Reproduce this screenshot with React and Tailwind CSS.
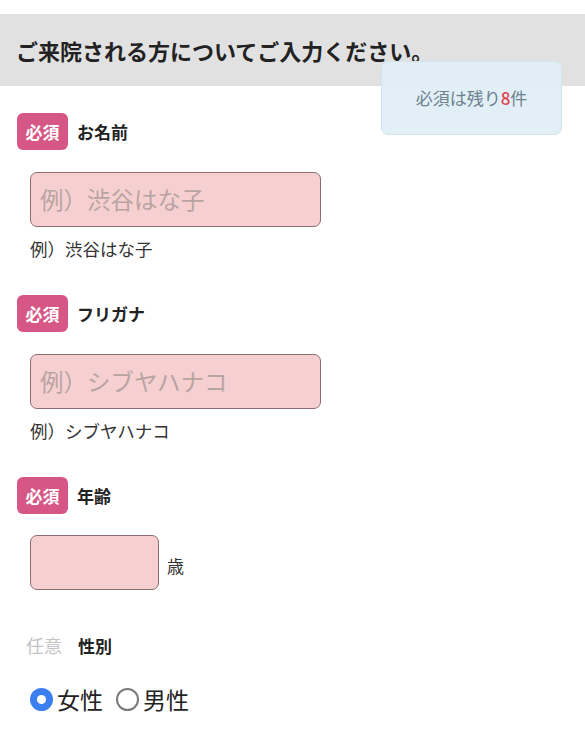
import React from "react";

const FONT = { fontFamily: '"Noto Sans CJK JP", "Noto Sans", sans-serif' };

function Required() {
  return (
    <span className="inline-flex items-center justify-center w-[51px] h-[37px] rounded-[6px] bg-[#d65686] text-white text-[17px] font-bold">
      必須
    </span>
  );
}

function Field({ label, placeholder, hint }) {
  return (
    <div className="flex flex-col">
      <div className="flex items-center gap-[9px] pl-[17px]">
        <Required />
        <span className="text-[17px] font-bold text-[#222]">{label}</span>
      </div>
      <div className="pl-[30px] mt-[22px]">
        <div className="w-[291px] h-[55px] rounded-[7px] border-[1.5px] border-[#8c6d70] bg-[#f6d0d0] flex items-center pl-[9px] text-[23.5px] text-[#b9a4a4]">
          {placeholder}
        </div>
        <div className="mt-[9px] text-[17.5px] leading-[26px] text-[#333]">{hint}</div>
      </div>
    </div>
  );
}

export default function App() {
  return (
    <div className="relative w-[585px] h-[734px] bg-white overflow-hidden" style={FONT}>
      <div className="pt-[14px]">
        <div className="h-[72px] bg-[#e1e1e1] flex items-center pl-[16px]">
          <h1 className="text-[22px] font-bold text-[#222]">ご来院される方についてご入力ください。</h1>
        </div>
      </div>

      {/* remaining counter */}
      <div className="absolute left-[381px] top-[61px] w-[181px] h-[74px] rounded-[7px] border border-[#d3e4ee] bg-[#e0eef6]/95 flex items-center justify-center text-[17px] text-[#6e8290]">
        必須は残り<span className="text-[#e0464f] font-medium">8</span>件
      </div>

      <div className="flex flex-col pt-[27px]">
        <Field label="お名前" placeholder="例）渋谷はな子" hint="例）渋谷はな子" />
        <div className="h-[33px]" />
        <Field label="フリガナ" placeholder="例）シブヤハナコ" hint="例）シブヤハナコ" />
        <div className="h-[33px]" />
        <div className="flex flex-col">
          <div className="flex items-center gap-[9px] pl-[17px]">
            <Required />
            <span className="text-[17px] font-bold text-[#222]">年齢</span>
          </div>
          <div className="pl-[30px] mt-[21px] flex items-center gap-[8px]">
            <div className="w-[129px] h-[55px] rounded-[7px] border-[1.5px] border-[#8c6d70] bg-[#f6d0d0]" />
            <span className="text-[17px] text-[#333] mt-[6px]">歳</span>
          </div>
        </div>

        <div className="flex items-center pl-[26px] mt-[42px] gap-[16px]">
          <span className="text-[18px] text-[#c4c4c4]">任意</span>
          <span className="text-[17px] font-bold text-[#222]">性別</span>
        </div>

        <div className="flex items-center pl-[30px] mt-[23px] text-[23px] text-[#222]">
          <span className="w-[23px] h-[23px] rounded-full bg-[#3c7ff0] flex items-center justify-center">
            <span className="w-[9px] h-[9px] rounded-full bg-white" />
          </span>
          <span className="ml-[4px]">女性</span>
          <span className="ml-[13px] w-[23px] h-[23px] rounded-full border-2 border-[#7a7a7a] bg-white" />
          <span className="ml-[4px]">男性</span>
        </div>
      </div>
    </div>
  );
}
